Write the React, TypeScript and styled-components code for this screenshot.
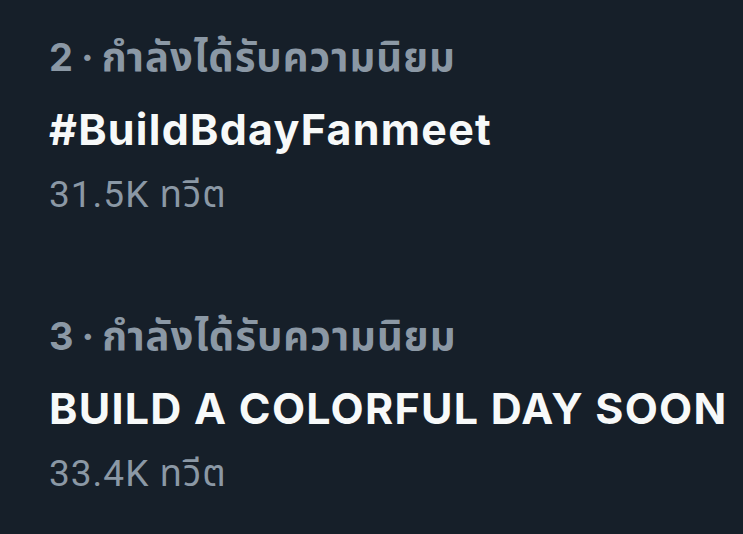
import React from "react";
import styled, { createGlobalStyle } from "styled-components";

const Global = createGlobalStyle`
  html, body {
    margin: 0;
    padding: 0;
    background: #161f29;
  }
  body {
    width: 743px;
    height: 534px;
    overflow: hidden;
  }
`;

const List = styled.div`
  display: flex;
  flex-direction: column;
  gap: 94px;
  padding: 32px 0 0 49px;
  background: #161f29;
  min-height: 534px;
  box-sizing: border-box;
`;

const Trend = styled.div`
  display: flex;
  flex-direction: column;
`;

const Meta = styled.div`
  font-family: Inter, "Noto Sans", "Noto Sans Thai", sans-serif;
  font-weight: 700;
  font-size: 38px;
  line-height: 50px;
  letter-spacing: 1px;
  word-spacing: -3px;
  color: #8b98a5;
  white-space: nowrap;
`;

const MetaLabel = styled.span`
  font-size: 40px;
`;

const Title = styled.div`
  font-family: Inter, "Noto Sans", sans-serif;
  font-weight: 700;
  font-size: 43px;
  line-height: 56px;
  padding-top: 19px;
  letter-spacing: 1.25px;
  color: #f7f9f9;
  white-space: nowrap;
`;

const Count = styled.div`
  font-family: Roboto, "Noto Sans", "Noto Sans Thai", sans-serif;
  font-weight: 400;
  font-size: 37px;
  line-height: 44px;
  padding-top: 16px;
  letter-spacing: 1px;
  color: #8b98a5;
  white-space: nowrap;
`;

const trends = [
  { rank: 2, title: "#BuildBdayFanmeet", count: "31.5K" },
  { rank: 3, title: "BUILD A COLORFUL DAY SOON", count: "33.4K" },
];

export default function App() {
  return (
    <>
      <Global />
      <List>
        {trends.map((t) => (
          <Trend key={t.rank}>
            <Meta>
              {t.rank} · <MetaLabel>กำลังได้รับความนิยม</MetaLabel>
            </Meta>
            <Title>{t.title}</Title>
            <Count>{t.count} ทวีต</Count>
          </Trend>
        ))}
      </List>
    </>
  );
}
